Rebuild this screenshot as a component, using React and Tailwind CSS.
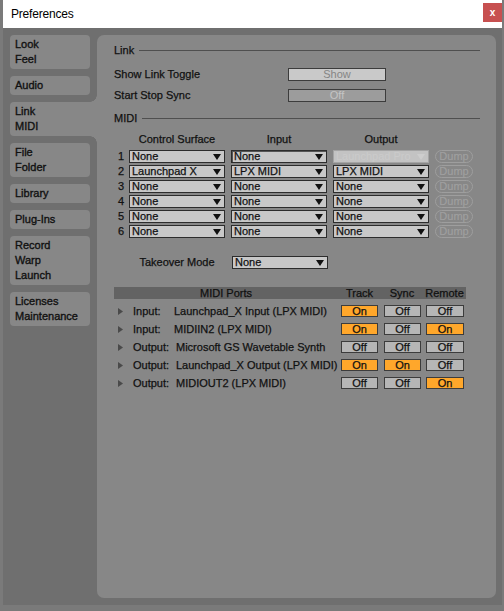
import React from "react";
import clsx from "clsx";

const TABS = [
  { lines: ["Look", "Feel"] },
  { lines: ["Audio"] },
  { lines: ["Link", "MIDI"], active: true },
  { lines: ["File", "Folder"] },
  { lines: ["Library"] },
  { lines: ["Plug-Ins"] },
  { lines: ["Record", "Warp", "Launch"] },
  { lines: ["Licenses", "Maintenance"] },
];

const SURFACES = [
  { n: 1, surface: "None", input: "None", output: "Launchpad Pro", outOff: true, focus: true },
  { n: 2, surface: "Launchpad X", input: "LPX MIDI", output: "LPX MIDI" },
  { n: 3, surface: "None", input: "None", output: "None" },
  { n: 4, surface: "None", input: "None", output: "None" },
  { n: 5, surface: "None", input: "None", output: "None" },
  { n: 6, surface: "None", input: "None", output: "None" },
];

const PORTS = [
  { kind: "Input:", name: "Launchpad_X Input (LPX MIDI)", track: true, sync: false, remote: false },
  { kind: "Input:", name: "MIDIIN2 (LPX MIDI)", track: true, sync: false, remote: true },
  { kind: "Output:", name: "Microsoft GS Wavetable Synth", track: false, sync: false, remote: false },
  { kind: "Output:", name: "Launchpad_X Output (LPX MIDI)", track: true, sync: true, remote: false },
  { kind: "Output:", name: "MIDIOUT2 (LPX MIDI)", track: false, sync: false, remote: true },
];

function DownArrow({ color = "#111" }) {
  return (
    <svg width="8" height="6" viewBox="0 0 8 6" aria-hidden="true">
      <path d="M0 0H8L4 6Z" fill={color} />
    </svg>
  );
}

function Chooser({ value, disabled, focus, width = "w-[96px]" }) {
  return (
    <div
      className={clsx(
        "flex h-[13px] items-center justify-between border pl-[2px] pr-[3px] leading-none",
        width,
        disabled
          ? "border-[#a4a4a4] bg-[#c3c3c3] text-[#cbcbcb] [-webkit-text-stroke:0px]"
          : "border-[#2c2c2c] bg-[#c8c8c8] text-[#111]",
        focus && "shadow-[inset_0_1px_0_#555,inset_1px_0_0_#555]"
      )}
    >
      <span>{value}</span>
      <DownArrow color={disabled ? "#cdcdcd" : "#111"} />
    </div>
  );
}

function Toggle({ on, className }) {
  return (
    <div
      className={clsx(
        "flex h-[12px] items-center justify-center border border-[#3c3c3c] leading-none text-[#111]",
        on ? "bg-[#ffa72b]" : "bg-[#b6b6b6]",
        className
      )}
    >
      {on ? "On" : "Off"}
    </div>
  );
}

function Heading({ children }) {
  return (
    <div className="flex h-[13px] items-center gap-[5px]">
      <span>{children}</span>
      <div className="h-px flex-1 bg-[#4f4f4f]" />
    </div>
  );
}

function TabList() {
  return (
    <div className="flex w-[80px] shrink-0 flex-col gap-[7px] [-webkit-text-stroke:0.35px_#111]">
      {TABS.map((t) => (
        <div
          key={t.lines[0]}
          className={clsx(
            "relative bg-[#878787] py-[2px] pl-[5px] leading-[15px]",
            t.active ? "-mr-[7px] rounded-l-[4px]" : "rounded-[4px]"
          )}
        >
          {t.lines.map((l) => (
            <div key={l}>{l}</div>
          ))}
          {t.active && (
            <>
              <span className="absolute -top-[7px] right-0 h-[7px] w-[7px] bg-[radial-gradient(circle_at_0_0,#6f6f6f_6.5px,#878787_7px)]" />
              <span className="absolute -bottom-[7px] right-0 h-[7px] w-[7px] bg-[radial-gradient(circle_at_0_100%,#6f6f6f_6.5px,#878787_7px)]" />
            </>
          )}
        </div>
      ))}
    </div>
  );
}

function LinkMidiPanel() {
  return (
    <div className="flex flex-1 flex-col rounded-[7px] bg-[#878787] pl-[17px] pr-[16px] pt-[9px] [-webkit-text-stroke:0.25px]">
      <Heading>Link</Heading>

      <div className="mt-[11px] flex h-[13px] items-center">
        <span className="w-[174px]">Show Link Toggle</span>
        <div className="flex h-[13px] w-[98px] items-center justify-center border border-[#3c3c3c] bg-[#c9c9c9] leading-none text-[#858585] [-webkit-text-stroke:0px]">
          Show
        </div>
      </div>
      <div className="mt-[8px] flex h-[13px] items-center">
        <span className="w-[174px]">Start Stop Sync</span>
        <div className="flex h-[13px] w-[98px] items-center justify-center border border-[#3c3c3c] bg-[#9c9c9c] leading-none text-[#c4c4c4] [-webkit-text-stroke:0px]">
          Off
        </div>
      </div>

      <div className="mt-[10px]">
        <Heading>MIDI</Heading>
      </div>

      <div className="mt-[8px] flex h-[13px] items-center gap-[6px] pl-[15px]">
        <span className="w-[96px] text-center">Control Surface</span>
        <span className="w-[96px] text-center">Input</span>
        <span className="w-[96px] text-center">Output</span>
      </div>

      <div className="mt-[4px] flex flex-col gap-[2px]">
        {SURFACES.map((r) => (
          <div key={r.n} className="flex h-[13px] items-center">
            <span className="w-[15px] pl-[4px]">{r.n}</span>
            <div className="flex items-center gap-[6px]">
              <Chooser value={r.surface} />
              <Chooser value={r.input} focus={r.focus} />
              <Chooser value={r.output} disabled={r.outOff} />
              <div className="flex h-[13px] w-[38px] items-center justify-center rounded-full border border-[#9e9e9e] leading-none text-[#a0a0a0] [-webkit-text-stroke:0.15px_#a0a0a0]">
                Dump
              </div>
            </div>
          </div>
        ))}
      </div>

      <div className="mt-[18px] flex h-[13px] items-center pl-[15px]">
        <span className="w-[96px] text-center">Takeover Mode</span>
        <div className="ml-[7px]">
          <Chooser value="None" />
        </div>
      </div>

      <div className="mt-[18px] flex h-[12px] w-[352px] items-center bg-[#636363] leading-none">
        <span className="w-[224px] text-center">MIDI Ports</span>
        <span className="w-[43px] text-center">Track</span>
        <span className="w-[42px] text-center">Sync</span>
        <span className="w-[43px] text-center">Remote</span>
      </div>

      <div className="mt-[3px] flex flex-col">
        {PORTS.map((p) => (
          <div key={p.name} className="flex h-[18px] items-center">
            <div className="flex w-[227px] items-center">
              <svg width="5" height="7" viewBox="0 0 5 7" className="ml-[4px] mr-[10px]" aria-hidden="true">
                <path d="M0 0L5 3.5L0 7Z" fill="#4a4a4a" />
              </svg>
              <span className={p.kind === "Input:" ? "w-[41px]" : "w-[43px]"}>{p.kind}</span>
              <span>{p.name}</span>
            </div>
            <Toggle on={p.track} className="w-[37px]" />
            <Toggle on={p.sync} className="ml-[6px] w-[37px]" />
            <Toggle on={p.remote} className="ml-[5px] w-[38px]" />
          </div>
        ))}
      </div>
    </div>
  );
}

export default function App() {
  return (
    <div className="h-[611px] w-[504px] overflow-hidden bg-[#7a7a7a] font-['Liberation_Sans',Arial,sans-serif] text-[11px] text-[#111]">
      <div className="ml-[3px] flex h-[605px] w-[499px] flex-col bg-[#6f6f6f]">
        <div className="flex h-[28px] shrink-0 items-center justify-between bg-white pl-[8px]">
          <span className="text-[12px] tracking-[-0.2px] text-black">Preferences</span>
          <div className="mb-[3px] flex h-[19px] w-[19px] items-center justify-center bg-[#c75050] text-[10px] font-bold leading-none text-white">
            x
          </div>
        </div>
        <div className="flex flex-1 gap-[7px] pb-[7px] pl-[7px] pr-[6px] pt-[7px]">
          <TabList />
          <LinkMidiPanel />
        </div>
      </div>
    </div>
  );
}
